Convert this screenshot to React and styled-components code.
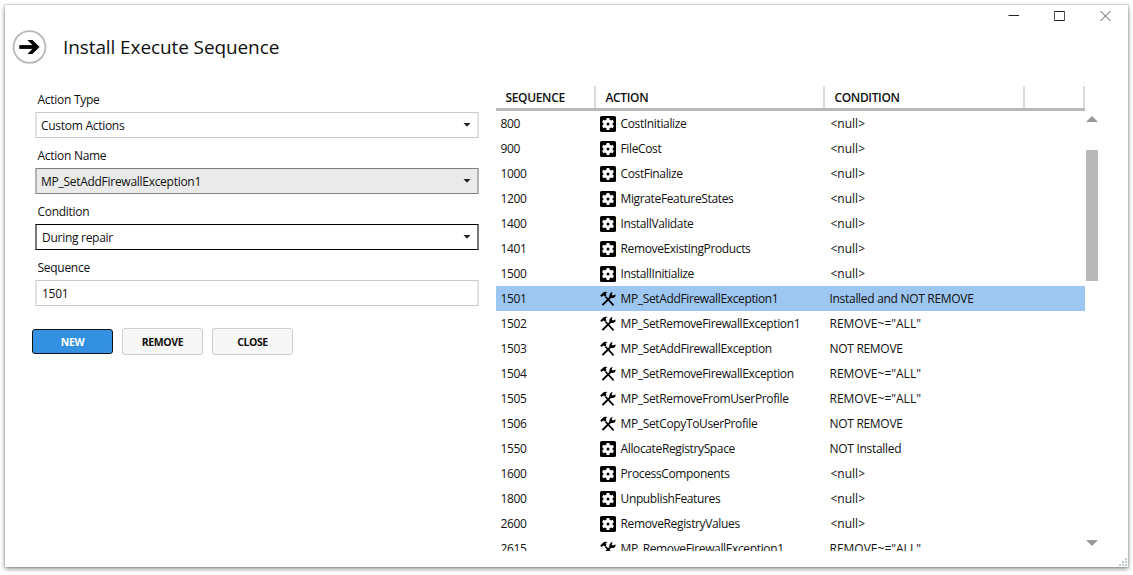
import React from "react";
import styled, { createGlobalStyle } from "styled-components";

const rows = [
  { sequence: "800", action: "CostInitialize", condition: "<null>" },
  { sequence: "900", action: "FileCost", condition: "<null>" },
  { sequence: "1000", action: "CostFinalize", condition: "<null>" },
  { sequence: "1200", action: "MigrateFeatureStates", condition: "<null>" },
  { sequence: "1400", action: "InstallValidate", condition: "<null>" },
  { sequence: "1401", action: "RemoveExistingProducts", condition: "<null>" },
  { sequence: "1500", action: "InstallInitialize", condition: "<null>" },
  {
    sequence: "1501",
    action: "MP_SetAddFirewallException1",
    condition: "Installed and NOT REMOVE",
    custom: true,
    selected: true
  },
  {
    sequence: "1502",
    action: "MP_SetRemoveFirewallException1",
    condition: 'REMOVE~="ALL"',
    custom: true
  },
  {
    sequence: "1503",
    action: "MP_SetAddFirewallException",
    condition: "NOT REMOVE",
    custom: true
  },
  {
    sequence: "1504",
    action: "MP_SetRemoveFirewallException",
    condition: 'REMOVE~="ALL"',
    custom: true
  },
  {
    sequence: "1505",
    action: "MP_SetRemoveFromUserProfile",
    condition: 'REMOVE~="ALL"',
    custom: true
  },
  {
    sequence: "1506",
    action: "MP_SetCopyToUserProfile",
    condition: "NOT REMOVE",
    custom: true
  },
  {
    sequence: "1550",
    action: "AllocateRegistrySpace",
    condition: "NOT Installed"
  },
  { sequence: "1600", action: "ProcessComponents", condition: "<null>" },
  { sequence: "1800", action: "UnpublishFeatures", condition: "<null>" },
  { sequence: "2600", action: "RemoveRegistryValues", condition: "<null>" },
  {
    sequence: "2615",
    action: "MP_RemoveFirewallException1",
    condition: 'REMOVE~="ALL"',
    custom: true
  }
];

const GearIcon = () => (
  <RowIcon viewBox="0 0 16 16">
    <rect width="16" height="16" rx="1.6" fill="#000" />
    <circle cx="8" cy="8" r="3.1" fill="none" stroke="#fff" strokeWidth="3.2" />
    <path
      d="M8 1.9v2.6M8 11.5v2.6M2.7 4.95l2.3 1.3M11 9.75l2.3 1.3M2.7 11.05l2.3-1.3M11 6.25l2.3-1.3"
      stroke="#fff"
      strokeWidth="2.8"
    />
  </RowIcon>
);

const ToolsIcon = () => (
  <RowIcon viewBox="0 0 16 16">
    <path d="M0.2 4.6 3.6 1.2Q5 .3 7.4 1.1L5.7 2.4 6.5 4.2 5 5.5 3.4 4.5 1.5 5.9z" />
    <path d="M5.4 5.5 13.6 14.3" stroke="#000" strokeWidth="1.7" />
    <path d="M10.6 6 2.4 14.2" stroke="#000" strokeWidth="1.9" />
    <path d="M9.4 6.2Q8.8 3.1 11 1.6L12.6 1 11.6 3.4 12.9 4.6 15.8 3.4Q15.8 6.2 13.2 6.9 11.6 7.3 10.4 6.9z" />
  </RowIcon>
);

const Field = ({ label, value, variant, select = true }) => (
  <FieldGroup>
    <FieldLabel>{label}</FieldLabel>
    <FieldBox $variant={variant} $inset={!select || variant === "focused"}>
      <span>{value}</span>
      {select && (
        <DropArrow viewBox="0 0 8 4">
          <path d="M.5 0h7L4 3.8z" />
        </DropArrow>
      )}
    </FieldBox>
  </FieldGroup>
);

const App = () => (
  <>
    <GlobalStyle />
    <Window>
      <Caption>
        <svg width="104" height="12" viewBox="0 0 104 12" fill="none">
          <path d="M1.5 5.5h10.5" stroke="#222" />
          <path d="M47 1.5h11M47 10.5h11" stroke="#222" />
          <path d="M47.5 1v10M57.5 1v10" stroke="#555" />
          <path d="M93.5 1l10 10M103.5 1l-10 10" stroke="#555" />
        </svg>
      </Caption>
      <Header>
        <svg width="36" height="36" viewBox="0 0 36 36" fill="none">
          <circle cx="17.5" cy="18" r="15.9" stroke="#b9b9b9" strokeWidth="1.8" />
          <path d="M7.3 18H25" stroke="#000" strokeWidth="3.8" />
          <path d="M15.4 11h5L27.6 18l-7.2 7h-5L22.4 18z" fill="#000" />
        </svg>
        <Title>Install Execute Sequence</Title>
      </Header>
      <Content>
        <Form>
          <Field label="Action Type" value="Custom Actions" />
          <Field
            label="Action Name"
            value="MP_SetAddFirewallException1"
            variant="hovered"
          />
          <Field label="Condition" value="During repair" variant="focused" />
          <Field label="Sequence" value="1501" select={false} />
          <Buttons>
            <Button $primary>NEW</Button>
            <Button>REMOVE</Button>
            <Button>CLOSE</Button>
          </Buttons>
        </Form>
        <Table>
          <TableHead>
            <HeadCell>SEQUENCE</HeadCell>
            <HeadCell>ACTION</HeadCell>
            <HeadCell>CONDITION</HeadCell>
            <HeadCell />
          </TableHead>
          <TableBody>
            {rows.map(row => (
              <Row key={row.sequence} $selected={row.selected}>
                <Cell>{row.sequence}</Cell>
                <ActionCell>
                  {row.custom ? <ToolsIcon /> : <GearIcon />}
                  <span>{row.action}</span>
                </ActionCell>
                <ConditionCell
                  $operator={/[<~]/.test(row.condition)}
                  $empty={row.condition === "<null>"}
                >
                  {row.condition}
                </ConditionCell>
              </Row>
            ))}
          </TableBody>
        </Table>
        <ScrollBar>
          <ScrollArrow viewBox="0 0 12 6">
            <path d="M0 6 6 0l6 6z" />
          </ScrollArrow>
          <ScrollThumb />
          <ScrollArrow viewBox="0 0 12 6">
            <path d="M0 0h12L6 6z" />
          </ScrollArrow>
        </ScrollBar>
      </Content>
      <ResizeGrip viewBox="0 0 9 9">
        <path d="M6 0h2v2H6zM3 3h2v2H3zM6 3h2v2H6zM0 6h2v2H0zM3 6h2v2H3zM6 6h2v2H6z" />
      </ResizeGrip>
    </Window>
  </>
);

const GlobalStyle = createGlobalStyle`
  * {
    box-sizing: border-box;
  }
  body {
    margin: 0;
    background: #fff;
    overflow: hidden;
    font-family: "Open Sans", "Noto Sans", sans-serif;
    font-size: 12px;
    letter-spacing: -0.28px;
    color: #111;
  }
  svg {
    display: block;
    flex: none;
  }
`;

const Window = styled.div`
  position: relative;
  display: flex;
  flex-direction: column;
  width: 1123px;
  height: 562px;
  margin: 5px;
  background: #fff;
  box-shadow: 0 0 1px 1px rgba(0, 0, 0, 0.1), 0 2px 5px rgba(0, 0, 0, 0.42);
`;

const Caption = styled.div`
  display: flex;
  justify-content: flex-end;
  height: 24px;
  padding: 5px 17px 0 0;
`;

const Header = styled.div`
  display: flex;
  align-items: center;
  height: 36px;
  padding-left: 7px;
`;

const Title = styled.h1`
  margin: 0 0 0 15px;
  font-size: 19px;
  font-weight: 400;
  line-height: 26px;
  letter-spacing: -0.1px;
`;

const Content = styled.div`
  display: flex;
  align-items: flex-start;
  padding: 21px 0 0 30px;
`;

const Form = styled.div`
  width: 444px;
  padding-top: 2px;
`;

const FieldGroup = styled.div`
  height: 56px;
`;

const FieldLabel = styled.div`
  height: 24px;
  padding-left: 2.5px;
  line-height: 24px;
`;

const borders = {
  normal: "#c9c9c9 #e2e2e2",
  hovered: "#7e7e7e #b4b4b4",
  focused: "#000 #777"
};

const FieldBox = styled.div`
  display: flex;
  align-items: center;
  justify-content: space-between;
  height: 26px;
  padding: 1px 6px 0 ${props => (props.$inset ? 5 : 4)}px;
  border-style: solid;
  border-width: 1px 2px;
  border-color: ${props => borders[props.$variant || "normal"]};
  background: ${props => (props.$variant === "hovered" ? "#eaeaea" : "#fff")};
`;

const DropArrow = styled.svg`
  width: 8px;
  height: 4px;
  margin-top: -1px;
  fill: #222;
`;

const Buttons = styled.div`
  display: flex;
  align-items: center;
  gap: 9px;
  margin: 16px 0 0 -3px;
`;

const Button = styled.button`
  width: 81px;
  height: ${props => (props.$primary ? 25 : 27)}px;
  padding: 0;
  border: 1px solid ${props => (props.$primary ? "#111" : "#cdcdcd")};
  border-radius: 3px;
  background: ${props => (props.$primary ? "#3491e1" : "#f7f7f7")};
  color: ${props => (props.$primary ? "#fff" : "#111")};
  font-family: inherit;
  font-size: 10.5px;
  font-weight: 700;
  letter-spacing: -0.4px;
`;

const Table = styled.div`
  width: 589px;
  margin-left: 16.5px;
`;

const TableHead = styled.div`
  display: grid;
  grid-template-columns: 100px 229px 200px 60px;
  height: 25px;
  border-bottom: 3px solid #b9b9b9;
`;

const HeadCell = styled.div`
  padding: 3px 0 0 10px;
  border-right: 2px solid #dadada;
  font-size: 12px;
  font-weight: 600;
  line-height: 17px;
  letter-spacing: -0.35px;
`;

const TableBody = styled.div`
  height: 440px;
  overflow: hidden;
`;

const Row = styled.div`
  display: grid;
  grid-template-columns: 98px 230px 1fr;
  height: 25px;
  line-height: 25px;
  letter-spacing: -0.36px;
  background: ${props => (props.$selected ? "#9dc6f0" : "transparent")};
`;

const Cell = styled.div`
  padding-left: 5px;
  white-space: nowrap;
`;

const ConditionCell = styled(Cell)`
  padding-left: ${props => (props.$empty ? 7 : 6)}px;
  letter-spacing: ${props => (props.$operator ? 0 : -0.3)}px;
`;

const ActionCell = styled.div`
  display: flex;
  align-items: center;
  gap: 5px;
  padding-left: 6px;
  white-space: nowrap;
`;

const RowIcon = styled.svg`
  width: 16px;
  height: 16px;
`;

const ScrollBar = styled.div`
  display: flex;
  flex-direction: column;
  align-items: center;
  width: 12px;
  height: 430px;
  margin: 30px 0 0 1px;
`;

const ScrollArrow = styled.svg`
  width: 12px;
  height: 6px;
  fill: #999;
`;

const ScrollThumb = styled.div`
  width: 12px;
  height: 131px;
  margin: 28px 0 259px;
  background: #b9b9b9;
`;

const ResizeGrip = styled.svg`
  position: absolute;
  right: 0;
  bottom: 0;
  width: 9px;
  height: 9px;
  fill: #c3cad6;
`;

export default App;
